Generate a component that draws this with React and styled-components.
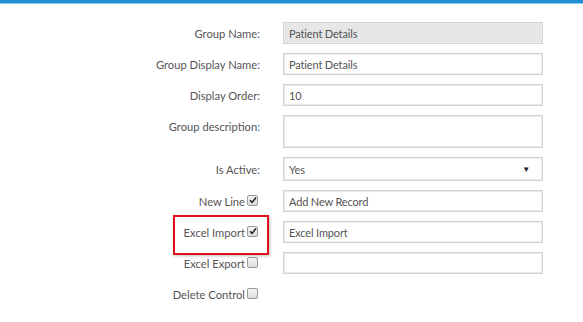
import React from "react";
import styled, { createGlobalStyle } from "styled-components";

const Global = createGlobalStyle`
  html, body { margin: 0; padding: 0; background: #fff; }
  body { font-family: Lato, "Open Sans", sans-serif; }
`;

const Page = styled.div`
  width: 583px;
  height: 322px;
  overflow: hidden;
  background: #fff;
`;

const TopBar = styled.div`
  height: 3px;
  background: #1d8fd3;
  border-bottom: 1px solid #8ccaf0;
`;

const Form = styled.div`
  display: grid;
  grid-template-columns: 260px 260px;
  column-gap: 23px;
  row-gap: 9px;
  padding-top: 18px;
  align-items: start;
`;

const Label = styled.div`
  position: relative;
  height: ${(p) => p.$h || 22}px;
  display: flex;
  align-items: ${(p) => (p.$top ? "flex-start" : "center")};
  padding-top: ${(p) => (p.$top ? 5 : 0)}px;
  box-sizing: border-box;
  justify-content: flex-end;
  gap: 2px;
  font-size: 11.2px;
  color: #555;
  white-space: nowrap;
  ${(p) => (p.$check ? "padding-right: 2px;" : "")}
`;

const Highlight = styled.div`
  position: absolute;
  left: 173px;
  right: -9px;
  top: -6px;
  bottom: -12px;
  border: 2px solid #e2101c;
  box-shadow: 1px 1px 3px rgba(0, 0, 0, 0.25);
  pointer-events: none;
`;

const Field = styled.div`
  height: ${(p) => p.$h || 22}px;
  box-sizing: border-box;
  border: 1px solid #d2d2d2;
  box-shadow: inset 0 0 0 1px #ececec;
  background: ${(p) => (p.$disabled ? "#e6e6e6" : "#fff")};
  display: flex;
  align-items: ${(p) => (p.$top ? "flex-start" : "center")};
  justify-content: space-between;
  padding: 0 12px 0 5px;
  font-size: 11px;
  letter-spacing: -0.15px;
  color: #555;
`;

const Caret = styled.span`
  font-size: 8px;
  color: #222;
`;

const Box = styled.span`
  display: inline-flex;
  align-items: center;
  justify-content: center;
  width: 9px;
  height: 9px;
  border: 1px solid #9a9a9a;
  border-radius: 2px;
  background: linear-gradient(#f4f4f4, #dcdcdc);
  margin-bottom: 2px;
`;

const Check = ({ checked }) => (
  <Box>
    {checked && (
      <svg width="8" height="8" viewBox="0 0 8 8">
        <path d="M1 4.2 L3.1 6.4 L7 1.4" stroke="#222" strokeWidth="1.6" fill="none" />
      </svg>
    )}
  </Box>
);

const Empty = styled.div`
  height: 22px;
`;

export default function App() {
  return (
    <Page>
      <Global />
      <TopBar />
      <Form>
        <Label>Group Name:</Label>
        <Field $disabled>Patient Details</Field>

        <Label>Group Display Name:</Label>
        <Field>Patient Details</Field>

        <Label>Display Order:</Label>
        <Field>10</Field>

        <Label $h={33} $top>Group description:</Label>
        <Field $h={33} />

        <Label $h={24}>Is Active:</Label>
        <Field $h={24}>
          Yes<Caret>▼</Caret>
        </Field>

        <Label $check>
          New Line <Check checked />
        </Label>
        <Field>Add New Record</Field>

        <Label $check>
          Excel Import <Check checked />
          <Highlight />
        </Label>
        <Field>Excel Import</Field>

        <Label $check>
          Excel Export <Check />
        </Label>
        <Field />

        <Label $check>
          Delete Control <Check />
        </Label>
        <Empty />
      </Form>
    </Page>
  );
}
